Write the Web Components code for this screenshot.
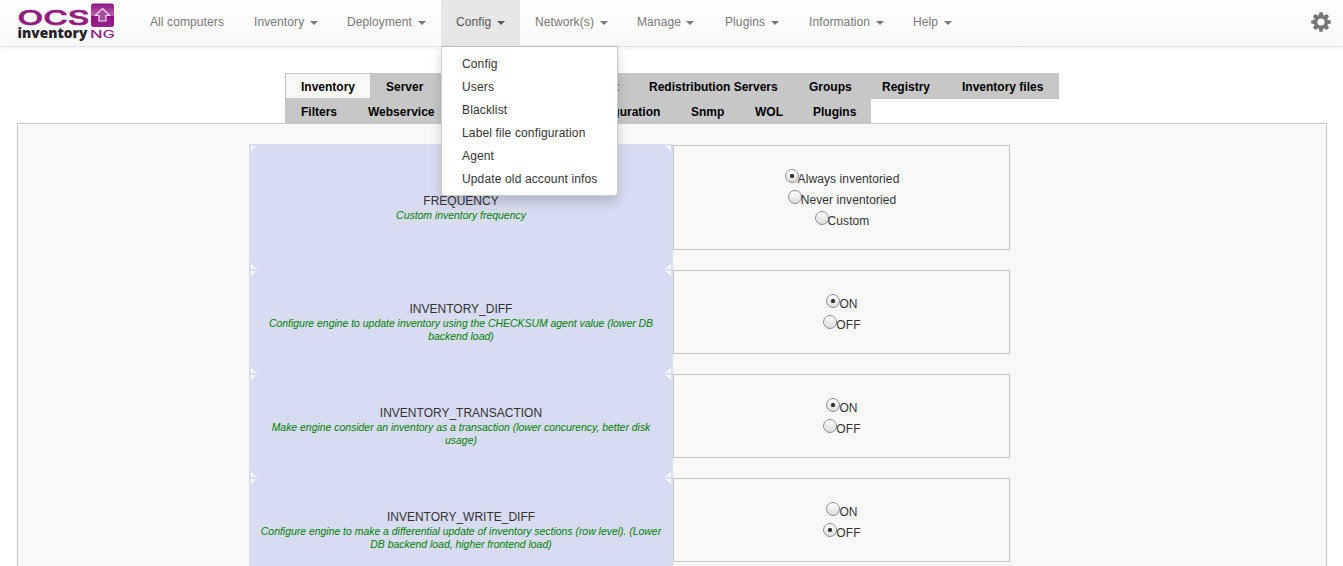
<!DOCTYPE html>
<html lang="en"><head><meta charset="utf-8"><title>OCS Inventory</title>
<style>
html,body{margin:0;height:100%;overflow:hidden;background:#fff}
body{font:12px/17px "Liberation Sans",Arial,sans-serif;color:#333}
</style></head><body>
<ocs-app></ocs-app>
<script>
function define(name, html){
  const t=document.createElement('template'); t.innerHTML=html;
  customElements.define(name, class extends HTMLElement{
    constructor(){super();this.attachShadow({mode:'open'}).appendChild(t.content.cloneNode(true));}
  });
}
define('ocs-logo',`<style>:host{display:block;width:100px;height:42px}svg{display:block}</style>
<svg width="100" height="42" viewBox="16 0 100 42">
<defs><linearGradient id="g" x1="0" y1="0" x2="0" y2="1"><stop offset="0" stop-color="#8d1180"/><stop offset=".5" stop-color="#b865ae"/><stop offset=".55" stop-color="#8f1482"/><stop offset="1" stop-color="#98228c"/></linearGradient></defs>
<text x="17.5" y="25.2" font-family="Inter,sans-serif" font-weight="500" font-size="20.5" fill="#951b81" stroke="#951b81" stroke-width=".7" textLength="72" lengthAdjust="spacingAndGlyphs">OCS</text>
<rect x="91" y="3.5" width="23" height="23.5" rx="2.5" fill="url(#g)"/>
<path d="M102.5 8.5l7 7h-3.5v5.5h-7v-5.5h-3.5z" fill="#a94a9f" stroke="#f2dff0" stroke-width="1.2"/>
<text x="17.5" y="38" font-family="Open Sans,sans-serif" font-weight="800" font-size="13.5" fill="#26222a" textLength="70" lengthAdjust="spacingAndGlyphs">inventory</text>
<text x="90" y="38.2" font-family="Inter,sans-serif" font-weight="500" font-size="10" fill="#951b81" textLength="25" lengthAdjust="spacingAndGlyphs">NG</text>
</svg>`);
define('nav-item',`<style>:host{display:flex;align-items:center;box-sizing:border-box;height:46px;padding:0 0 1px 15px;color:#777;position:relative;letter-spacing:.1px}
:host([active]){background:#e7e7e7;color:#555}
i{display:none;width:0;height:0;border:4px solid transparent;border-top-color:currentColor;border-bottom:0;margin:1px 0 0 5.5px}
:host([caret]) i{display:block}</style><slot></slot><i></i><slot name="menu"></slot>`);
define('drop-menu',`<style>:host{position:absolute;z-index:5;left:0;top:46px;width:177px;height:150px;box-sizing:border-box;padding:5px 0;background:#fff;border:1px solid #ccc;border-top-color:#bbb;border-radius:0 0 4px 4px;box-shadow:0 6px 12px rgba(0,0,0,.175);color:#333;letter-spacing:.14px}</style><slot></slot>`);
define('menu-item',`<style>:host{display:block;height:23px;line-height:25px;padding-left:20px;white-space:nowrap}</style><slot></slot>`);
define('gear-icon',`<style>:host{display:block;width:20px;height:20px}svg{display:block}</style><svg width="20" height="20" viewBox="-10 -10 20 20"><g fill="#777"><circle r="7.2"/><path id="t" d="M-2.3-6.5L-1.6-9.8H1.6L2.3-6.5zM-2.3 6.5L-1.6 9.8H1.6L2.3 6.5z"/><use href="#t" transform="rotate(45)"/><use href="#t" transform="rotate(90)"/><use href="#t" transform="rotate(135)"/></g><circle r="3.6" fill="#fbfbfb"/></svg>`);
define('nav-bar',`<style>:host{display:flex;height:46px;background:linear-gradient(#fff,#f8f8f8);border-bottom:1px solid #e4e4e4;box-shadow:0 1px 5px rgba(0,0,0,.075);position:relative;z-index:4}
ocs-logo{margin:0 19px 0 16px}gear-icon{margin:12px 12px 0 auto}</style>
<ocs-logo></ocs-logo>
<nav-item style="width:104px">All computers</nav-item>
<nav-item caret style="width:93px">Inventory</nav-item>
<nav-item caret style="width:109px">Deployment</nav-item>
<nav-item caret active style="width:79px">Config
<drop-menu slot="menu"><menu-item>Config</menu-item><menu-item>Users</menu-item><menu-item>Blacklist</menu-item><menu-item>Label file configuration</menu-item><menu-item>Agent</menu-item><menu-item>Update old account infos</menu-item></drop-menu></nav-item>
<nav-item caret style="width:102px">Network(s)</nav-item>
<nav-item caret style="width:88px">Manage</nav-item>
<nav-item caret style="width:84px">Plugins</nav-item>
<nav-item caret style="width:104px">Information</nav-item>
<nav-item caret style="width:69px">Help</nav-item>
<gear-icon></gear-icon>`);
define('tab-item',`<style>:host{display:block;box-sizing:border-box;height:25px;line-height:29px;padding-left:16px;white-space:nowrap;color:#000;font-weight:bold}
:host([active]){background:#f8f8f8;border:1px solid #c7c7c7;border-width:1px 0 0 1px;line-height:27px;padding-left:15px}</style><slot></slot>`);
define('tab-row',`<style>:host{display:flex;width:max-content;background:#c7c7c7;height:25px}:host(:first-child){height:26px;margin-bottom:-1px}</style><slot></slot>`);
define('radio-line',`<style>:host{display:flex;height:21px;justify-content:center;align-items:center;letter-spacing:.1px}
i{flex:none;box-sizing:border-box;width:14px;height:14px;border:1px solid #8e8e8e;border-radius:50%;background:linear-gradient(#fcfcfc,#dedede);margin:-2px -1px 0 0}
:host([on]) i{background:radial-gradient(circle,#333 0 1.8px,transparent 2.5px),linear-gradient(#fcfcfc,#dedede)}
span{padding-top:5px}</style><i></i><span><slot></slot></span>`);
define('config-row',`<style>:host{display:grid;grid-template-columns:424px 337px;align-items:start}
.l{position:relative;box-sizing:border-box;align-self:stretch;background:#d7dcf2;text-align:center;display:flex;flex-direction:column;justify-content:center;padding:0 10px}
.n{line-height:16px}.d{font-size:10.43px;line-height:13px;font-style:italic;color:green}
.r{box-sizing:border-box;border:1px solid #c7c7c7;padding:20px 0 20px 1px;margin-bottom:20px}
svg{position:absolute;width:6px;height:6px;fill:#f8f8f8}
.b{left:2px;top:1px}.c{right:2px;top:1px;transform:scaleX(-1)}.e{left:2px;bottom:1px;transform:scaleY(-1)}.f{right:2px;bottom:1px;transform:scale(-1)}</style>
<div class="l">${['b','c','e','f'].map(c=>`<svg class="${c}" viewBox="0 0 6 6"><path d="M0 0H6Q2 2 0 6z"/></svg>`).join('')}<div class="n"><slot name="name"></slot></div><div class="d"><slot name="desc"></slot></div></div><div class="r"><slot></slot></div>`);
define('config-panel',`<style>:host{display:block;box-sizing:border-box;margin:0 16px 0 17px;height:460px;background:#f8f8f8;border:1px solid #c7c7c7;padding:20px 0 0 231px}
.t{height:1px;width:424px;background:#d7dcf2}</style><div class="t"></div><slot></slot>`);
define('ocs-app',`<style>:host{display:block}.tabs{margin:26px 0 0 285px}</style>
<nav-bar></nav-bar>
<div class="tabs"><tab-row><tab-item active style="width:85px">Inventory</tab-item><tab-item style="width:71px">Server</tab-item><tab-item style="width:93px"></tab-item><tab-item style="width:99px">Deployment</tab-item><tab-item style="width:160px">Redistribution Servers</tab-item><tab-item style="width:73px">Groups</tab-item><tab-item style="width:80px">Registry</tab-item><tab-item style="width:113px">Inventory files</tab-item></tab-row>
<tab-row><tab-item style="width:67px">Filters</tab-item><tab-item style="width:99px">Webservice</tab-item><tab-item style="width:86px"></tab-item><tab-item style="width:138px">Files configuration</tab-item><tab-item style="width:64px">Snmp</tab-item><tab-item style="width:58px">WOL</tab-item><tab-item style="width:74px">Plugins</tab-item></tab-row></div>
<config-panel>
<config-row><span slot="name">FREQUENCY</span><span slot="desc">Custom inventory frequency</span><radio-line on>Always inventoried</radio-line><radio-line>Never inventoried</radio-line><radio-line>Custom</radio-line></config-row>
<config-row><span slot="name">INVENTORY_DIFF</span><span slot="desc">Configure engine to update inventory using the CHECKSUM agent value (lower DB<br>backend load)</span><radio-line on>ON</radio-line><radio-line>OFF</radio-line></config-row>
<config-row><span slot="name">INVENTORY_TRANSACTION</span><span slot="desc">Make engine consider an inventory as a transaction (lower concurency, better disk<br>usage)</span><radio-line on>ON</radio-line><radio-line>OFF</radio-line></config-row>
<config-row><span slot="name">INVENTORY_WRITE_DIFF</span><span slot="desc">Configure engine to make a differential update of inventory sections (row level). (Lower<br>DB backend load, higher frontend load)</span><radio-line>ON</radio-line><radio-line on>OFF</radio-line></config-row>
</config-panel>`);
</script></body></html>
